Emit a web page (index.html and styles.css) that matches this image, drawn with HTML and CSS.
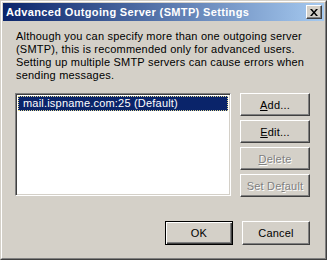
FILE: index.html
```html
<!DOCTYPE html>
<html lang="en">
<head>
  <meta charset="UTF-8" />
  <title>Advanced Outgoing Server (SMTP) Settings</title>
  <link rel="stylesheet" href="styles.css">
</head>
<body>
  <div class="window">
    <div class="frame">
      <div class="titlebar">
        <span class="title">Advanced Outgoing Server (SMTP) Settings</span>
        <span class="close-btn">
          <svg width="8" height="7" viewBox="0 0 8 7">
            <path d="M0 0h2l2 2.5L6 0h2L5 3.5 8 7H6L4 4.5 2 7H0l3-3.5z" fill="#000"/>
          </svg>
        </span>
      </div>

      <div class="content">
        <p class="intro">
          Although you can specify more than one outgoing server<br>
          (SMTP), this is recommended only for advanced users.<br>
          Setting up multiple SMTP servers can cause errors when<br>
          sending messages.
        </p>

        <div class="middle">
          <div class="list">
            <div class="item selected">mail.ispname.com:25 (Default)</div>
          </div>
          <div class="side-buttons">
            <button class="btn"><u>A</u>dd...</button>
            <button class="btn"><u>E</u>dit...</button>
            <button class="btn disabled"><u>D</u>elete</button>
            <button class="btn disabled">Set De<u>f</u>ault</button>
          </div>
        </div>

        <div class="footer">
          <button class="btn wide default">OK</button>
          <button class="btn wide">Cancel</button>
        </div>
      </div>
    </div>
  </div>
</body>
</html>
```

FILE: styles.css
```css
* {
  margin: 0;
  padding: 0;
  box-sizing: border-box;
}

body {
  font-family: 'Liberation Sans', Arial, sans-serif;
  font-size: 11px;
  letter-spacing: 0.2px;
  color: #000;
  background: #d4d0c8;
}

.window {
  width: 327px;
  height: 260px;
  border: 1px solid;
  border-color: #d4d0c8 #404040 #404040 #d4d0c8;
}

.frame {
  height: 100%;
  border: 1px solid;
  border-color: #fff #808080 #808080 #fff;
  padding: 1px;
  background: #d4d0c8;
}

.titlebar {
  height: 18px;
  display: flex;
  align-items: center;
  justify-content: space-between;
  padding: 0 2px 0 3px;
  background: linear-gradient(to right, #0a246a, #a6caf0);
}

.title {
  color: #fff;
  font-weight: bold;
  font-size: 11px;
  letter-spacing: 0.35px;
}

.close-btn {
  width: 16px;
  height: 14px;
  display: flex;
  align-items: center;
  justify-content: center;
  background: #d4d0c8;
  border: 1px solid;
  border-color: #fff #404040 #404040 #fff;
  box-shadow: inset -1px -1px #808080;
}

.content {
  padding: 9px 14px 0 12px;
}

.intro {
  line-height: 13px;
  padding-left: 1px;
}

.middle {
  display: flex;
  gap: 9px;
  margin-top: 11px;
}

.list {
  width: 216px;
  height: 103px;
  background: #fff;
  border: 1px solid;
  border-color: #808080 #fff #fff #808080;
  box-shadow: inset 1px 1px #404040, inset -1px -1px #d4d0c8;
  padding: 2px 2px;
}

.item {
  height: 15px;
  line-height: 13px;
  padding-left: 4px;
  white-space: nowrap;
}

.item.selected {
  background: #0a246a;
  color: #fff;
  border: 1px dotted #e0d890;
}

.side-buttons {
  display: flex;
  flex-direction: column;
  gap: 4px;
}

.btn {
  width: 70px;
  height: 23px;
  font-family: inherit;
  font-size: 11px;
  letter-spacing: 0.2px;
  color: #000;
  background: #d4d0c8;
  border: 1px solid;
  border-color: #fff #404040 #404040 #fff;
  box-shadow: inset -1px -1px #808080;
}

.btn.disabled {
  color: #808080;
  text-shadow: 1px 1px #fff;
}

.footer {
  display: flex;
  justify-content: flex-end;
  gap: 9px;
  margin-top: 24px;
}

.btn.wide {
  width: 68px;
  height: 24px;
}

.btn.default {
  border-color: #000;
  box-shadow: inset 1px 1px #fff, inset -1px -1px #404040, inset -2px -2px #808080;
}
```
